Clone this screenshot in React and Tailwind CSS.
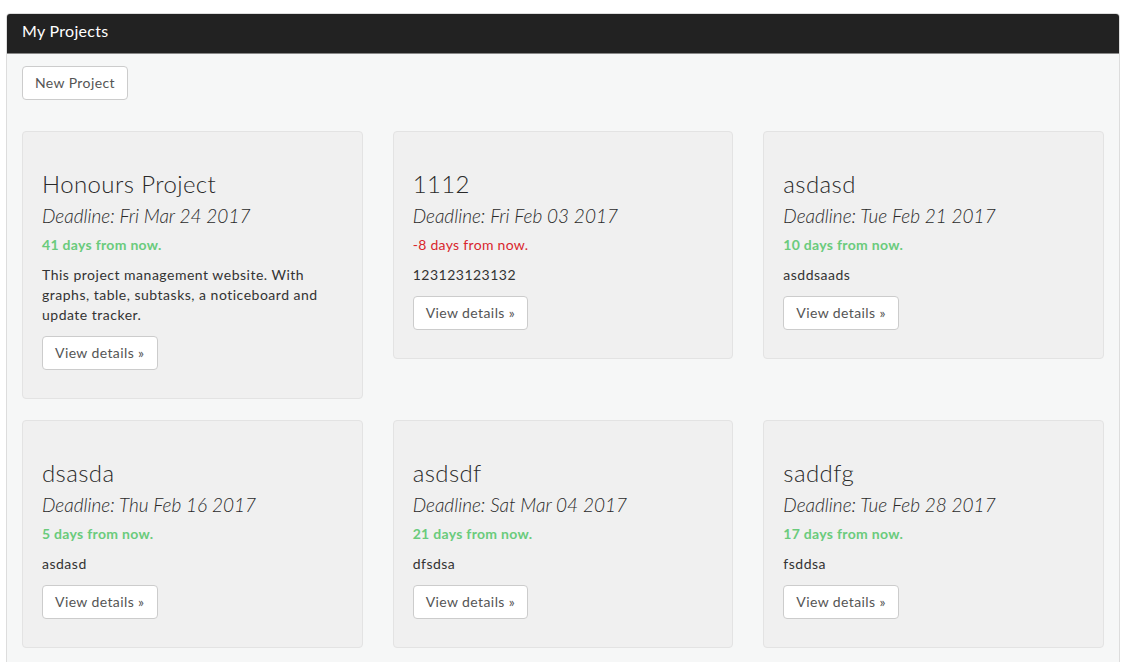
const projects = [
  {
    title: "Honours Project",
    deadline: "Fri Mar 24 2017",
    days: 41,
    desc: "This project management website. With graphs, table, subtasks, a noticeboard and update tracker.",
  },
  { title: "1112", deadline: "Fri Feb 03 2017", days: -8, desc: "123123123132" },
  { title: "asdasd", deadline: "Tue Feb 21 2017", days: 10, desc: "asddsaads" },
  { title: "dsasda", deadline: "Thu Feb 16 2017", days: 5, desc: "asdasd" },
  { title: "asdsdf", deadline: "Sat Mar 04 2017", days: 21, desc: "dfsdsa" },
  { title: "saddfg", deadline: "Tue Feb 28 2017", days: 17, desc: "fsddsa" },
];

const ProjectCard = ({ project }) => {
  const late = project.days < 0;
  return (
    <div className="rounded-[4px] border border-[#e3e3e3] bg-[#f0f0f0] px-[19px] pt-[39px] pb-[28px] text-[#333]">
      <h2 className="text-[24px] leading-[26px] font-light tracking-[0.4px] text-[#2a2a2a]">{project.title}</h2>
      <h3 className="mt-[8px] text-[19px] leading-[22px] italic font-light text-[#2a2a2a]">
        Deadline: {project.deadline}
      </h3>
      <p
        className={`mt-[8px] text-[14px] leading-[20px] tracking-[0.3px] ${late ? "text-[#d9262d]" : "font-bold text-[#6acb7c]"}`}
      >
        {project.days} days from now.
      </p>
      <p className="mt-[10px] text-[14px] leading-[20px] tracking-[0.5px]">{project.desc}</p>
      <button className="mt-[11px] rounded-[4px] border border-[#ccc] bg-white px-[12px] py-[6px] text-[14px] leading-[20px] tracking-[0.4px] text-[#555]">
        View details »
      </button>
    </div>
  );
};

export default function App() {
  return (
    <div
      className="min-h-screen bg-white pt-[13px] pl-[6px]"
      style={{ fontFamily: "Lato, 'Open Sans', sans-serif" }}
    >
      <div className="w-[1114px] rounded-t-[4px] border border-[#dddddd] bg-[#f6f7f7]">
        <div className="h-[40px] rounded-t-[3px] border-b border-[#888] bg-[#222222] px-[15px] pt-[7px] text-[16px] leading-[20px] tracking-[0.3px] text-white">
          My Projects
        </div>
        <div className="px-[15px] pt-[12px] pb-[20px]">
          <button className="rounded-[4px] border border-[#ccc] bg-white px-[12px] py-[6px] text-[14px] leading-[20px] tracking-[0.4px] text-[#555]">
            New Project
          </button>
          <div className="mt-[31px] grid grid-cols-3 items-start gap-x-[30px] gap-y-[21px]">
            {projects.map((p) => (
              <ProjectCard key={p.title} project={p} />
            ))}
          </div>
        </div>
      </div>
    </div>
  );
}
